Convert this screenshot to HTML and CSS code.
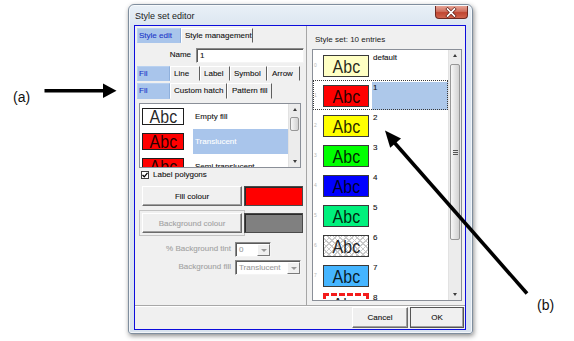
FILE: index.html
```html
<!DOCTYPE html>
<html>
<head>
<meta charset="utf-8">
<link rel="stylesheet" href="styles.css">
</head>
<body>
<div class="page">
  <div class="window">
    <div class="titlebar">
      <span class="title">Style set editor</span>
      <span class="close">
        <svg width="33" height="13" viewBox="0 0 33 13">
          <path d="M13 3 L20 10 M20 3 L13 10" stroke="#5a1a12" stroke-width="3.2" stroke-linecap="square"/>
          <path d="M13 3 L20 10 M20 3 L13 10" stroke="#fff" stroke-width="1.8" stroke-linecap="square"/>
        </svg>
      </span>
    </div>
    <div class="client">
      <div class="main">
        <div class="left">
          <div class="tabs t1">
            <span class="tab sel w44">Style edit</span>
            <span class="tab w72">Style management</span>
          </div>
          <div class="name-row">
            <span class="name-label">Name</span>
            <span class="input">1</span>
          </div>
          <div class="tabs t2">
            <span class="tab sel w33">Fil</span>
            <span class="tab w30">Line</span>
            <span class="tab w30">Label</span>
            <span class="tab w37">Symbol</span>
            <span class="tab w33b">Arrow</span>
          </div>
          <div class="tabs t3">
            <span class="tab sel w33">Fil</span>
            <span class="tab w57">Custom hatch</span>
            <span class="tab w45">Pattern fill</span>
          </div>
          <div class="listbox fills">
            <div class="items">
              <div class="frow"><span class="fsw fw"><span class="abc">Abc</span></span><span class="ftxt">Empty fill</span></div>
              <div class="frow sel"><span class="fsw fr"><span class="abc">Abc</span></span><span class="ftxt">Translucent</span></div>
              <div class="frow"><span class="fsw fr"><span class="abc">Abc</span></span><span class="ftxt">Semi translucent</span></div>
            </div>
            <div class="sb sb-small">
              <span class="arr"><i class="up"></i></span>
              <span class="thumb th-small"></span>
              <span class="track"></span>
              <span class="arr"><i class="down"></i></span>
            </div>
          </div>
          <div class="check-row">
            <span class="cb"><svg width="6" height="6" viewBox="0 0 6 6"><path d="M0.5 3 L2.3 4.8 L5.5 0.8" stroke="#000" stroke-width="1.3" fill="none"/></svg></span>
            <span class="cb-label">Label polygons</span>
          </div>
          <div class="colour-row">
            <span class="btn cbtn-wide">Fill colour</span>
            <span class="swatch red"></span>
          </div>
          <div class="colour-row bg-row">
            <span class="btn cbtn-wide disabled framed">Background colour</span>
            <span class="swatch grey"></span>
          </div>
          <div class="combo-row r-tint">
            <span class="clabel">% Background tint</span>
            <span class="combo c36"><span class="cv">0</span><span class="cdrop"><i class="tri"></i></span></span>
          </div>
          <div class="combo-row r-fill">
            <span class="clabel">Background fill</span>
            <span class="combo c66"><span class="cv">Translucent</span><span class="cdrop"><i class="tri"></i></span></span>
          </div>
        </div>
        <div class="right">
          <div class="set-title">Style set: 10 entries</div>
          <div class="listbox styles">
            <div class="items">
              <div class="srow"><span class="idx">0</span><span class="sw s0"><span class="abc">Abc</span></span><span class="stxt">default</span></div>
              <div class="srow sel"><span class="idx">1</span><span class="sw s1"><span class="abc">Abc</span></span><span class="stxt">1</span></div>
              <div class="srow"><span class="idx">2</span><span class="sw s2"><span class="abc">Abc</span></span><span class="stxt">2</span></div>
              <div class="srow"><span class="idx">3</span><span class="sw s3"><span class="abc">Abc</span></span><span class="stxt">3</span></div>
              <div class="srow"><span class="idx">4</span><span class="sw s4"><span class="abc">Abc</span></span><span class="stxt">4</span></div>
              <div class="srow"><span class="idx">5</span><span class="sw s5"><span class="abc">Abc</span></span><span class="stxt">5</span></div>
              <div class="srow"><span class="idx">6</span><span class="sw s6"><span class="abc">Abc</span></span><span class="stxt">6</span></div>
              <div class="srow"><span class="idx">7</span><span class="sw s7"><span class="abc">Abc</span></span><span class="stxt">7</span></div>
              <div class="srow"><span class="idx">8</span><span class="sw s8"><span class="abc">Abc</span></span><span class="stxt">8</span></div>
            </div>
            <div class="sb sb-big">
              <span class="arr"><i class="up"></i></span>
              <span class="thumb th-big"><i class="grip"></i></span>
              <span class="track"></span>
              <span class="arr"><i class="down"></i></span>
            </div>
          </div>
        </div>
      </div>
      <div class="footer">
        <span class="btn fbtn cancel">Cancel</span>
        <span class="btn fbtn ok">OK</span>
      </div>
    </div>
  </div>

  <div class="note note-a">(a)</div>
  <div class="note note-b">(b)</div>
  <svg class="arrows" width="574" height="341" viewBox="0 0 574 341">
    <line x1="44.5" y1="90.8" x2="106" y2="90.8" stroke="#000" stroke-width="3.5"/>
    <polygon points="103,83.5 116.5,90.8 103,98" fill="#000"/>
    <line x1="527" y1="293.5" x2="393" y2="141" stroke="#000" stroke-width="3.6"/>
    <polygon points="385,130.5 401,138.4 390.2,147.8" fill="#000"/>
  </svg>
</div>
</body>
</html>
```

FILE: styles.css
```css
* { box-sizing: border-box; }
html, body { margin: 0; padding: 0; background: #fff; }

.page {
  position: relative;
  width: 574px;
  height: 341px;
  overflow: hidden;
  padding: 4px 0 0 128px;
  font-family: "Liberation Sans", Arial, sans-serif;
  font-size: 8px;
  color: #111;
}

/* window frame */
.window {
  width: 345px;
  height: 330px;
  border: 1px solid #7f8e9e;
  border-radius: 6px 6px 3px 3px;
  background: linear-gradient(#e9f0f7, #dbe5f0 22px, #d9e3ee);
  padding: 0 6px 3px 5px;
  display: flex;
  flex-direction: column;
  box-shadow: 1px 2px 5px rgba(0,0,0,.45), inset 0 0 0 1px rgba(255,255,255,.65);
}
.titlebar {
  height: 20px;
  display: flex;
  align-items: flex-start;
}
.title {
  font-size: 9px;
  line-height: 20px;
  padding-top: 1px;
  margin-left: 1px;
  color: #1b1b1b;
}
.close {
  margin-left: auto;
  margin-right: -2px;
  margin-top: 1px;
  width: 33px;
  height: 13px;
  border: 1px solid #6e2a22;
  border-top: none;
  border-radius: 0 0 4px 4px;
  background: linear-gradient(#e6a597, #d0705f 45%, #c04632 55%, #d0644e);
  display: flex;
}
.close svg { display: block; margin-left: -1px; }

.client {
  flex: 1;
  border: 1px solid #0c0cdc;
  background: #f0f0f0;
  display: flex;
  flex-direction: column;
  -webkit-text-stroke: 0.1px currentColor;
}
.main { flex: 1; display: flex; min-height: 0; }

/* left panel */
.left {
  width: 172px;
  border-right: 1px solid #a6a6a6;
  padding: 2px 0 0 2px;
  display: flex;
  flex-direction: column;
}
.tabs { display: flex; flex-shrink: 0; }
.t1 { height: 15px; }
.t2 { height: 15px; margin-top: 3px; }
.t3 { height: 16px; margin-top: 2px; }
.tab {
  display: block;
  height: 100%;
  padding-left: 3px;
  line-height: 13px;
  border: 1px solid;
  border-color: #fff #5f5f5f transparent #fff;
  white-space: nowrap;
  overflow: hidden;
}
.tab.sel {
  background: #a9c5eb;
  color: #1c36c9;
  border-color: #b9d1f0 #8fb0dc transparent #b9d1f0;
  padding-left: 1px;
}
.w44 { width: 44px; }
.w72 { width: 72px; }
.w33 { width: 33px; }
.w30 { width: 30px; }
.w37 { width: 37px; }
.w33b { width: 33px; padding-left: 4px; }
.w57 { width: 57px; }
.w45 { width: 45px; padding-left: 4px; }

.name-row {
  display: flex;
  height: 15px;
  margin-top: 5px;
  flex-shrink: 0;
}
.name-label {
  width: 54px;
  text-align: right;
  line-height: 14px;
}
.input {
  margin-left: 5px;
  width: 108px;
  background: #fff;
  border: 1px solid;
  border-color: #8a8a8a #f4f4f4 #f4f4f4 #8a8a8a;
  box-shadow: inset 1px 1px #5a5a5a;
  padding-left: 3px;
  line-height: 13px;
}

/* list boxes */
.listbox {
  display: flex;
  background: #fff;
  border: 1px solid #8a8f98;
  flex-shrink: 0;
  overflow: hidden;
}
.items { flex: 1; display: flex; flex-direction: column; overflow: hidden; }
.fills { margin: 4px 0 0 2px; width: 162px; height: 65px; }

.frow { height: 25px; display: flex; flex-shrink: 0; }
.fsw {
  width: 42px;
  height: 17px;
  margin: 4px 0 0 2px;
  border: 1px solid #1e1e1e;
  display: flex;
  align-items: center;
  justify-content: center;
  overflow: hidden;
  flex-shrink: 0;
}
.fw { background: #fff; }
.fr { background: #ff0000; }
.ftxt {
  flex: 1;
  margin-left: 9px;
  display: flex;
  align-items: center;
  padding: 0 0 1px 2px;
  white-space: nowrap;
}
.frow.sel .ftxt { background: #a9c5eb; color: #fff; }

.abc {
  display: inline-block;
  font-size: 19px;
  line-height: 19px;
  transform: scaleX(0.84);
  color: rgba(0,0,0,.86);
  -webkit-text-stroke: 0;
}

/* scrollbars */
.sb {
  display: flex;
  flex-direction: column;
  background: #ececec;
  border-left: 1px solid #e2e2e2;
  flex-shrink: 0;
}
.sb-small { width: 12px; }
.sb-big { width: 13px; }
.arr {
  height: 11px;
  display: flex;
  align-items: center;
  justify-content: center;
  flex-shrink: 0;
}
.up, .down { width: 0; height: 0; border-left: 2.5px solid transparent; border-right: 2.5px solid transparent; }
.up { border-bottom: 3px solid #3c3c3c; }
.down { border-top: 3px solid #3c3c3c; }
.thumb {
  margin: 2px 1px 0 1px;
  border: 1px solid #979797;
  border-radius: 2px;
  background: linear-gradient(90deg, #f7f7f7, #e2e2e2 55%, #d2d2d2);
  display: flex;
  align-items: center;
  justify-content: center;
  flex-shrink: 0;
}
.th-small { height: 14px; }
.th-big { height: 176px; margin-top: 3px; }
.grip {
  width: 5px;
  height: 5px;
  background: repeating-linear-gradient(#555 0 1px, transparent 1px 2px);
}
.track { flex: 1; }

/* checkbox */
.check-row {
  display: flex;
  align-items: center;
  height: 10px;
  margin-top: 2px;
  flex-shrink: 0;
}
.cb {
  width: 8px;
  height: 8px;
  margin-left: 4px;
  border: 1px solid #3d3d3d;
  background: #fff;
  display: flex;
  align-items: center;
  justify-content: center;
}
.cb svg { display: block; }
.cb-label { margin-left: 4px; line-height: 10px; }

/* colour rows */
.colour-row {
  display: flex;
  height: 20px;
  margin-top: 6px;
  flex-shrink: 0;
  padding-left: 5px;
}
.bg-row { margin-top: 7px; }
.btn {
  display: flex;
  align-items: center;
  justify-content: center;
  background: #f0f0f0;
  border: 1px solid;
  border-color: #fff #6b6b6b #6b6b6b #fff;
  box-shadow: inset -1px -1px #a0a0a0;
}
.cbtn-wide { width: 100px; }
.disabled { color: #a2a2a2; }
.framed { outline: 1px solid #c4c4c4; outline-offset: 2px; }
.swatch {
  width: 59px;
  margin-left: 2px;
  border: 1px solid #4a4a4a;
  box-shadow: inset 1px 1px #2a2a2a;
}
.red { background: #ff0000; }
.grey { background: #808080; }

/* combo rows */
.combo-row {
  display: flex;
  height: 15px;
  flex-shrink: 0;
}
.r-tint { margin-top: 9px; }
.r-fill { margin-top: 3px; }
.clabel {
  width: 94px;
  text-align: right;
  line-height: 14px;
  color: #a2a2a2;
  white-space: nowrap;
}
.combo {
  margin-left: 4px;
  display: flex;
  background: #fff;
  border: 1px solid;
  border-color: #8a8a8a #f4f4f4 #f4f4f4 #8a8a8a;
  box-shadow: inset 1px 1px #5a5a5a;
  padding: 1px 0 0 1px;
}
.c36 { width: 36px; }
.c66 { width: 66px; }
.cv { flex: 1; color: #9c9c9c; padding-left: 2px; line-height: 12px; white-space: nowrap; overflow: hidden; }
.cdrop {
  width: 13px;
  background: #f0f0f0;
  border: 1px solid;
  border-color: #fff #7a7a7a #7a7a7a #fff;
  display: flex;
  align-items: center;
  justify-content: center;
}
.tri { width: 0; height: 0; border-left: 3px solid transparent; border-right: 3px solid transparent; border-top: 3px solid #9a9a9a; }

/* right panel */
.right {
  flex: 1;
  display: flex;
  flex-direction: column;
  padding: 0 3px 0 5px;
}
.set-title {
  margin: 9px 0 0 3px;
  line-height: 10px;
  -webkit-text-stroke: 0;
  color: #1a1a1a;
}
.styles { margin-top: 4px; height: 252px; }
.srow { height: 30px; display: flex; flex-shrink: 0; }
.srow.sel { outline: 1px dotted #3a3a3a; outline-offset: -1px; }
.idx {
  width: 10px;
  font-size: 5px;
  line-height: 30px;
  padding-left: 1px;
  color: #b8b8b8;
  -webkit-text-stroke: 0;
  flex-shrink: 0;
}
.sw {
  width: 46px;
  height: 22px;
  margin-top: 5px;
  border: 1px solid #3a3a3a;
  display: flex;
  align-items: center;
  justify-content: center;
  overflow: hidden;
  flex-shrink: 0;
}
.s0 { background: #ffffc4; }
.s1 { background: #ff0000; }
.s2 { background: #ffff00; }
.s3 { background: #00ff00; }
.s4 { background: #0000ff; }
.s5 { background: #00f07c; }
.s6 {
  background:
    repeating-linear-gradient(45deg, #c9c9c9 0 1px, transparent 1px 4px),
    repeating-linear-gradient(-45deg, #c9c9c9 0 1px, transparent 1px 4px),
    #fff;
}
.s7 { background: #45b5ff; }
.s8 { background: #fff; border: 3px dashed #f31c1c; margin-top: 3px; }
.stxt {
  flex: 1;
  margin: 2px 0 0 3px;
  padding: 1px 0 0 1px;
  line-height: 9px;
}
.srow.sel .stxt { background: #adc8ea; }

/* footer */
.footer {
  height: 24px;
  border-top: 1px solid #a8a8a8;
  box-shadow: inset 0 1px #fff;
  display: flex;
  justify-content: flex-end;
  gap: 2px;
  padding: 1px 1px 1px 0;
  flex-shrink: 0;
}
.fbtn { height: 21px; }
.cancel { width: 56px; }
.ok { width: 54px; border-color: #fff #3a3a3a #3a3a3a #fff; outline: 1px solid #555; outline-offset: -1px; }

/* annotations */
.note {
  position: absolute;
  font-family: "Liberation Sans", Arial, sans-serif;
  font-size: 14px;
  line-height: 16px;
  color: #111;
}
.note-a { left: 13px; top: 89px; }
.note-b { left: 537px; top: 297px; }
.arrows { position: absolute; left: 0; top: 0; pointer-events: none; }
```
